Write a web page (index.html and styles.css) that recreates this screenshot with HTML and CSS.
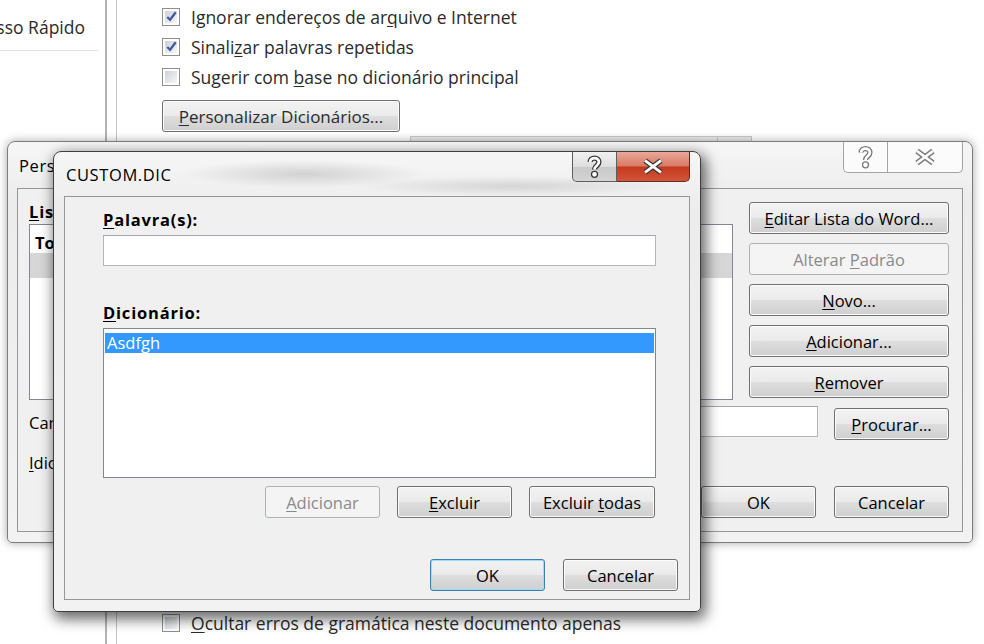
FILE: index.html
```html
<!DOCTYPE html>
<html lang="pt-BR">
<head>
    <meta charset="UTF-8">
    <title>Personalizar Dicionários</title>
    <link rel="stylesheet" href="styles.css">
</head>
<body>
    <div class="options">
        <aside class="sidebar">
            <div class="side-item"><span>Barra de Ferramentas de Acesso Rápido</span></div>
        </aside>
        <div class="rule"></div>
        <main class="options-content">
            <label class="check"><span class="box checked"><svg viewBox="0 0 16 16"><path d="M3.5 8.5 L6.5 11.5 L12.5 3.5"/></svg></span><span>Ignorar endereços de ar<u>q</u>uivo e Internet</span></label>
            <label class="check"><span class="box checked"><svg viewBox="0 0 16 16"><path d="M3.5 8.5 L6.5 11.5 L12.5 3.5"/></svg></span><span>Sinali<u>z</u>ar palavras repetidas</span></label>
            <label class="check"><span class="box"></span><span>Sugerir com <u>b</u>ase no dicionário principal</span></label>
            <button class="btn btn-wide"><u>P</u>ersonalizar Dicionários...</button>
            <label class="check check-last"><span class="box"></span><span><u>O</u>cultar erros de gramática neste documento apenas</span></label>
        </main>
    </div>

    <div class="ghost-bar"><span></span></div>

    <!-- back dialog -->
    <div class="window win-back">
        <div class="titlebar">
            <span class="title">Personalizar Dicionários</span>
            <div class="caption inactive">
                <span class="cap-help"><svg viewBox="0 0 44 30"><path class="o" d="M17.5 10.5 C17.5 5 26.5 5 26.5 10.5 C26.5 14.5 22 14 22 18"/><path class="i" d="M17.5 10.5 C17.5 5 26.5 5 26.5 10.5 C26.5 14.5 22 14 22 18"/><circle class="o" cx="22" cy="23" r="1"/><circle class="i" cx="22" cy="23" r="1"/></svg></span>
                <span class="cap-close"><svg viewBox="0 0 74 30"><path class="o" d="M29 9 L45 21 M45 9 L29 21"/><path class="i" d="M29 9 L45 21 M45 9 L29 21"/></svg></span>
            </div>
        </div>
        <div class="client back-client">
            <div class="back-top">
                <div class="back-left">
                    <div class="lbl bold"><u>L</u>ista de dicionários:</div>
                    <div class="listbox back-list">
                        <div class="list-head">Todos os idiomas:</div>
                        <div class="list-row inactive-sel"></div>
                    </div>
                </div>
                <div class="back-right">
                    <button class="btn"><u>E</u>ditar Lista do Word...</button>
                    <button class="btn" disabled>Alterar <u>P</u>adrão</button>
                    <button class="btn"><u>N</u>ovo...</button>
                    <button class="btn"><u>A</u>dicionar...</button>
                    <button class="btn"><u>R</u>emover</button>
                </div>
            </div>
            <div class="path-row">
                <span class="lbl">Caminho do arquivo:</span>
                <span class="field path-field"></span>
                <button class="btn btn-small"><u>P</u>rocurar...</button>
            </div>
            <div class="lbl lang-row"><u>I</u>dioma do dicionário:</div>
            <div class="footer back-footer">
                <button class="btn btn-small">OK</button>
                <button class="btn btn-small">Cancelar</button>
            </div>
        </div>
    </div>

    <!-- front dialog -->
    <div class="window win-front">
        <div class="titlebar">
            <span class="title">CUSTOM.DIC</span>
            <div class="caption">
                <span class="cap-help"><svg viewBox="0 0 44 29"><path class="o" d="M17.5 10 C17.5 4.5 26.5 4.5 26.5 10 C26.5 14 22 13.5 22 17.5"/><path class="i" d="M17.5 10 C17.5 4.5 26.5 4.5 26.5 10 C26.5 14 22 13.5 22 17.5"/><circle class="o" cx="22" cy="22.5" r="1"/><circle class="i" cx="22" cy="22.5" r="1"/></svg></span>
                <span class="cap-close"><svg viewBox="0 0 73 29"><path class="o" d="M28.5 8.5 L44.5 20.5 M44.5 8.5 L28.5 20.5"/><path class="i" d="M28.5 8.5 L44.5 20.5 M44.5 8.5 L28.5 20.5"/></svg></span>
            </div>
        </div>
        <div class="client front-client">
            <div class="form">
                <div class="lbl bold"><u>P</u>alavra(s):</div>
                <div class="field word-field"></div>
                <div class="lbl bold dic-label"><u>D</u>icionário:</div>
                <div class="listbox dic-list">
                    <div class="list-row selected">Asdfgh</div>
                </div>
                <div class="word-actions">
                    <button class="btn btn-small" disabled><u>A</u>dicionar</button>
                    <button class="btn btn-small"><u>E</u>xcluir</button>
                    <button class="btn btn-mid">Excluir <u>t</u>odas</button>
                </div>
            </div>
            <div class="footer front-footer">
                <button class="btn btn-small default">OK</button>
                <button class="btn btn-small">Cancelar</button>
            </div>
        </div>
    </div>
</body>
</html>
```

FILE: styles.css
```css
* {
    box-sizing: border-box;
    margin: 0;
    padding: 0;
}

body {
    width: 984px;
    height: 644px;
    overflow: hidden;
    position: relative;
    background: #fff;
    font-family: "Open Sans", Arial, sans-serif;
    color: #000;
}

u {
    text-decoration: underline;
    text-underline-offset: 2px;
}

/* word options page behind */
.options {
    display: flex;
    height: 644px;
    background: #fff;
    color: #2b2b2b;
    font-size: 17.5px;
}

.sidebar {
    width: 105px;
    padding-right: 7px;
}

.side-item {
    height: 51px;
    display: flex;
    justify-content: flex-end;
    align-items: center;
    overflow: hidden;
    white-space: nowrap;
    padding: 4px 13px 0 0;
    border-bottom: 1px solid #dde1e6;
}

.rule {
    width: 12px;
    border-left: 2px solid #b3b3b3;
    border-right: 1px solid #c4c4c4;
}

.options-content {
    flex: 1;
    display: flex;
    flex-direction: column;
    padding: 2px 0 6px 45px;
}

.check {
    height: 30px;
    display: flex;
    align-items: center;
    gap: 11px;
    white-space: nowrap;
}

.check-last {
    margin-top: auto;
}

.box {
    width: 18px;
    height: 18px;
    border: 1px solid #8e8f8f;
    background: #fff;
    padding: 2px;
    position: relative;
}

.box::before {
    content: "";
    display: block;
    width: 100%;
    height: 100%;
    background: linear-gradient(135deg, #cdd1d6, #f7f7f7);
}

.box svg {
    position: absolute;
    left: 1px;
    top: 0;
    width: 15px;
    height: 15px;
}

.box path {
    fill: none;
    stroke: #3c5a9f;
    stroke-width: 2.4;
}

.ghost-bar {
    position: absolute;
    left: 410px;
    top: 136px;
    width: 342px;
    height: 7px;
    border: 1px solid #c8c8c8;
    border-bottom: none;
    background: #ececec;
    display: flex;
    justify-content: flex-end;
}

.ghost-bar span {
    width: 34px;
    border-left: 1px solid #c8c8c8;
}

/* buttons */
.btn {
    height: 32px;
    border: 1px solid #707070;
    border-radius: 3px;
    background: linear-gradient(#f2f2f2 0%, #ebebeb 48%, #dddddd 52%, #cfcfcf 100%);
    box-shadow: inset 0 0 0 1px #fbfbfb;
    font-family: inherit;
    font-size: 16.5px;
    color: #000;
    padding: 0 6px;
    white-space: nowrap;
}

.btn:disabled {
    border-color: #adb2b5;
    background: #f4f4f4;
    box-shadow: none;
    color: #8a8a8a;
}

.btn.default {
    border-color: #3c7fb1;
    box-shadow: inset 0 0 0 1px #9ddcf7;
}

.btn-wide {
    width: 238px;
    margin: 8px 0 0;
    font-size: 17px;
    color: #2b2b2b;
}

.btn-small {
    width: 115px;
}

.btn-mid {
    width: 126px;
}

/* windows */
.window {
    position: absolute;
    display: flex;
    flex-direction: column;
    border: 1px solid #5a5a5a;
    border-radius: 8px 8px 5px 5px;
    background:
        radial-gradient(ellipse 120px 14px at 250px 22px, rgba(150,150,150,0.35), transparent),
        radial-gradient(ellipse 160px 10px at 460px 34px, rgba(150,150,150,0.3), transparent),
        linear-gradient(#f6f6f6, #ececec 60px, #f2f2f2);
    font-size: 16.5px;
}

.win-back {
    left: 7px;
    top: 141px;
    width: 966px;
    height: 402px;
    padding: 0 9px 10px;
    border-color: #7d7d7d;
    box-shadow: 0 0 10px rgba(0,0,0,0.35);
}

.win-front {
    left: 53px;
    top: 151px;
    width: 648px;
    height: 461px;
    padding: 0 10px 11px;
    border-color: #3f3f3f;
    box-shadow: 3px 5px 14px 2px rgba(0,0,0,0.6);
}

.win-back .titlebar {
    height: 46px;
}

.titlebar {
    height: 44px;
    display: flex;
    align-items: center;
    padding-left: 2px;
}

.title {
    flex: 1;
    font-size: 16.5px;
    letter-spacing: 0.6px;
    padding-top: 1px;
}

.caption {
    align-self: flex-start;
    display: flex;
    height: 30px;
}

.caption span {
    display: block;
    height: 100%;
    border: 1px solid #5e5e5e;
    border-top: none;
}

.caption svg {
    width: 100%;
    height: 100%;
}

.cap-help {
    width: 45px;
    border-radius: 0 0 0 5px;
    background: linear-gradient(#f1f1f1, #dedede 50%, #c9c9c9 52%, #d4d4d4);
}

.cap-close {
    width: 73px;
    border-left: none !important;
    border-radius: 0 0 5px 0;
    background: linear-gradient(#e9a898, #d77a64 48%, #c4391e 52%, #d2553a);
    border-color: #5e2f26 !important;
}

.caption .o {
    fill: none;
    stroke: #3a3a3a;
    stroke-width: 5.5;
}

.caption .i {
    fill: none;
    stroke: #fff;
    stroke-width: 2.8;
}

.caption circle.o,
.caption circle.i {
    fill: #fff;
}

.caption.inactive {
    height: 31px;
}

.caption.inactive span {
    border-color: #a3a3a3 !important;
    background: #fbfbfb;
}

.caption.inactive .cap-close {
    width: 75px;
}

.caption.inactive .o {
    stroke: #7a7a7a;
}

.client {
    flex: 1;
    background: #f0f0f0;
    border: 1px solid #979797;
    display: flex;
    flex-direction: column;
}

.lbl {
    height: 20px;
    line-height: 20px;
    white-space: nowrap;
}

.bold {
    font-weight: bold;
    letter-spacing: 0.8px;
}

.field {
    display: block;
    height: 31px;
    background: #fff;
    border: 1px solid #b3b5bb;
    border-top-color: #a3a6ad;
}

.listbox {
    background: #fff;
    border: 1px solid #828790;
}

.list-row {
    height: 20px;
    line-height: 20px;
    padding-left: 2px;
    white-space: nowrap;
}

.list-row.selected {
    background: #3399ff;
    color: #fff;
}

.list-row.inactive-sel {
    height: 25px;
    background: #d6d6d6;
    color: #000;
}

.footer {
    display: flex;
    justify-content: flex-end;
    gap: 18px;
}

/* back dialog client */
.back-client {
    padding: 13px 13px 0 11px;
}

.back-top {
    display: flex;
    gap: 16px;
}

.back-left {
    width: 704px;
}

.back-list {
    margin-top: 2px;
    height: 176px;
    padding: 6px 0 0;
}

.list-head {
    font-weight: bold;
    padding-left: 5px;
    height: 22px;
}

.back-right {
    flex: 1;
    display: flex;
    flex-direction: column;
    gap: 9px;
}

.path-row {
    margin-top: 6px;
    height: 34px;
    display: flex;
    gap: 16px;
}

.path-row .lbl {
    align-self: center;
}

.path-field {
    flex: 1;
    align-self: flex-start;
}

.path-row .btn {
    align-self: flex-end;
}

.lang-row {
    margin-top: 13px;
}

.back-footer {
    margin-top: 13px;
}

/* front dialog client */
.form {
    padding: 13px 33px 0 38px;
    display: flex;
    flex-direction: column;
}

.word-field {
    margin-top: 5px;
}

.dic-label {
    margin-top: 37px;
}

.dic-list {
    margin-top: 5px;
    height: 150px;
    padding: 4px 1px 0;
}

.word-actions {
    margin: 8px 1px 0 0;
    display: flex;
    justify-content: flex-end;
    gap: 17px;
}

.front-footer {
    margin-top: 41px;
    padding-right: 11px;
}
```
